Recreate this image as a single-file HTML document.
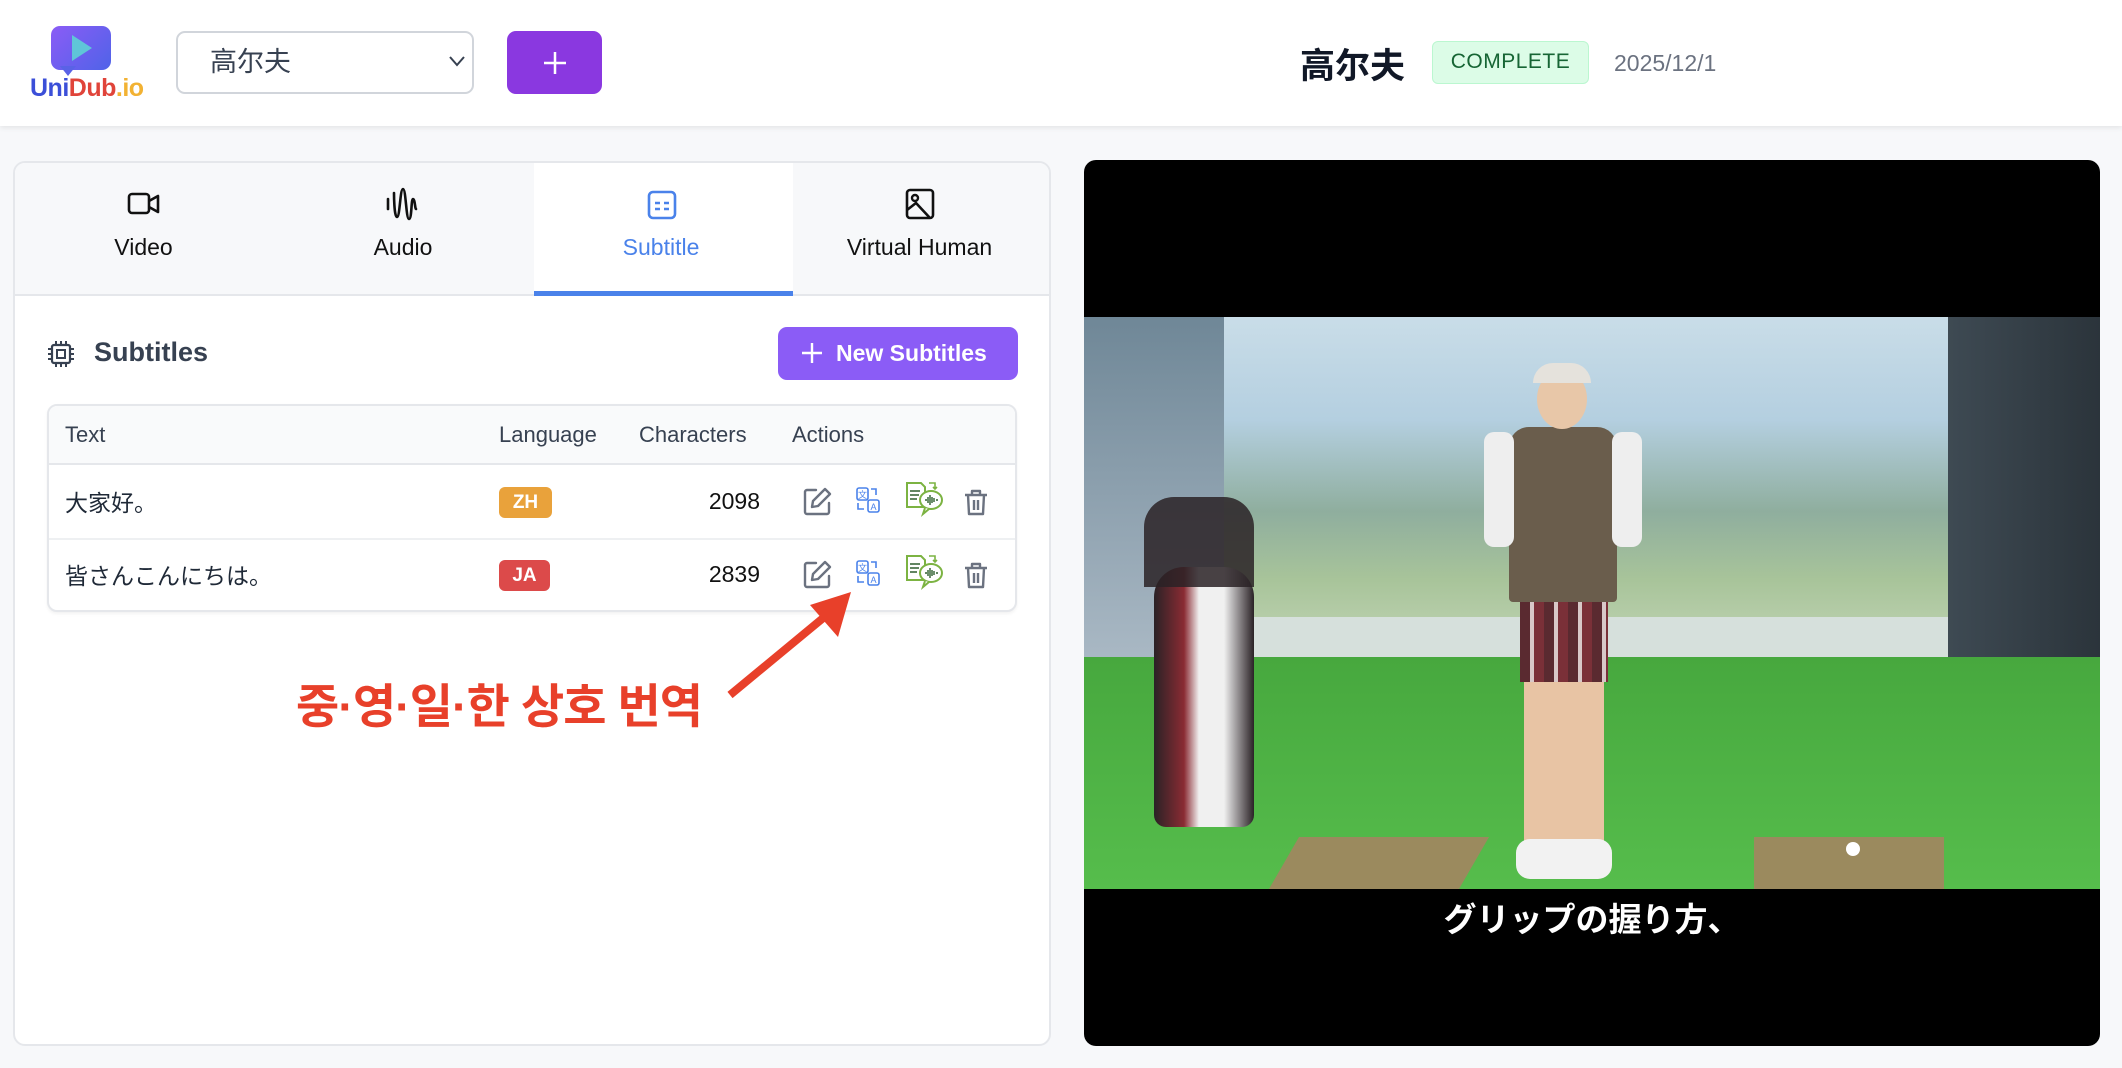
<!DOCTYPE html>
<html><head><meta charset="utf-8">
<style>
*{box-sizing:border-box;margin:0;padding:0}
body{width:2122px;height:1068px;background:#f7f8fa;font-family:"Liberation Sans","Noto Sans CJK SC",sans-serif;position:relative;overflow:hidden;color:#1f2937}
.abs{position:absolute}
.header{left:0;top:0;width:2122px;height:126px;background:#fff;box-shadow:0 2px 5px rgba(0,0,0,.08)}
.cjk{font-family:"Liberation Sans","Noto Sans CJK SC",sans-serif}
.jp{font-family:"Liberation Sans","Noto Sans CJK JP",sans-serif}
.kr{font-family:"Liberation Sans","Noto Sans CJK KR",sans-serif}
</style></head><body>
<div class="abs header"></div>
<!-- logo -->
<div class="abs" style="left:51px;top:26px;width:60px;height:44px;border-radius:9px;background:linear-gradient(135deg,#8b5cf6,#4f63e8)"></div>
<div class="abs" style="left:60px;top:66px;width:0;height:0;border-left:8px solid transparent;border-right:8px solid transparent;border-top:10px solid #5a62e6"></div>
<div class="abs" style="left:72px;top:35px;width:0;height:0;border-top:13px solid transparent;border-bottom:13px solid transparent;border-left:20px solid #5fc6d8"></div>
<div class="abs" style="left:30px;top:74px;font-size:25px;font-weight:bold;letter-spacing:-0.5px"><span style="color:#3b4fd8">Uni</span><span style="color:#e0443a">Dub</span><span style="color:#f2b233">.io</span></div>
<!-- select -->
<div class="abs cjk" style="left:176px;top:31px;width:298px;height:63px;border:2px solid #d1d5db;border-radius:9px;background:#fff;font-size:27px;line-height:59px;padding-left:32px;color:#374151">高尔夫</div>
<svg class="abs" style="left:448px;top:54px" width="18" height="14" viewBox="0 0 18 14"><path d="M2 3l7 8 7-8" fill="none" stroke="#374151" stroke-width="2"/></svg>
<div class="abs" style="left:507px;top:31px;width:95px;height:63px;border-radius:9px;background:#8a38e0"></div>
<svg class="abs" style="left:541px;top:49px" width="28" height="28"><path d="M14 3v22M3 14h22" stroke="#fff" stroke-width="2.5"/></svg>
<!-- title -->
<div class="abs cjk" style="left:1300px;top:38px;font-size:35px;font-weight:bold;color:#111827">高尔夫</div>
<div class="abs" style="left:1432px;top:41px;width:157px;height:43px;border:1.5px solid #bbf7d0;background:#dcfce7;border-radius:6px;color:#166534;font-size:21px;line-height:40px;text-align:center;letter-spacing:.5px">COMPLETE</div>
<div class="abs" style="left:1614px;top:50px;font-size:23px;color:#6b7280">2025/12/1</div>
<!-- left panel -->
<div class="abs" style="left:13px;top:161px;width:1038px;height:885px;background:#fff;border:2px solid #e5e7eb;border-radius:12px;overflow:hidden">
  <div class="abs" style="left:0;top:0;width:1036px;height:133px;background:#f7f8fa;border-bottom:2px solid #e5e7eb"></div>
  <div class="abs" style="left:519px;top:0;width:259px;height:133px;background:#fff;border-bottom:5px solid #4a82ea"></div>
</div>
<!-- tab icons -->
<svg class="abs" style="left:127px;top:191px" width="34" height="26" viewBox="0 0 34 26"><rect x="2" y="3" width="20" height="19" rx="3" fill="none" stroke="#111" stroke-width="2.6"/><path d="M22 10l9-5v16l-9-5" fill="none" stroke="#111" stroke-width="2.6" stroke-linejoin="round"/></svg>
<svg class="abs" style="left:385px;top:187px" width="34" height="36" viewBox="0 0 34 36"><path d="M3 12v10M9 6c0 0 0 24 3 24s3-28 6-28 3 30 6 30 2-20 4-20 2 10 3 10" fill="none" stroke="#111" stroke-width="2.6" stroke-linecap="round"/></svg>
<svg class="abs" style="left:647px;top:190px" width="30" height="30" viewBox="0 0 30 30"><rect x="2" y="2" width="26" height="26" rx="4" fill="none" stroke="#4a82ea" stroke-width="2.6"/><path d="M8 13h5M17 13h5M8 19h5M17 19h5" stroke="#4a82ea" stroke-width="2.6"/></svg>
<svg class="abs" style="left:905px;top:188px" width="30" height="32" viewBox="0 0 30 32"><rect x="2" y="2" width="26" height="28" rx="3" fill="none" stroke="#111" stroke-width="2.6"/><circle cx="10" cy="10" r="3" fill="none" stroke="#111" stroke-width="2.4"/><path d="M2 22l9-7 14 15" fill="none" stroke="#111" stroke-width="2.6"/></svg>
<div class="abs" style="left:0;top:234px;width:287px;text-align:center;font-size:23px;color:#111">Video</div>
<div class="abs" style="left:274px;top:234px;width:258px;text-align:center;font-size:23px;color:#111">Audio</div>
<div class="abs" style="left:532px;top:234px;width:258px;text-align:center;font-size:23px;color:#4a82ea">Subtitle</div>
<div class="abs" style="left:790px;top:234px;width:259px;text-align:center;font-size:23px;color:#111">Virtual Human</div>
<!-- subtitles header -->
<svg class="abs" style="left:47px;top:339px" width="28" height="30" viewBox="0 0 28 30"><rect x="5" y="6" width="18" height="18" rx="2" fill="none" stroke="#374151" stroke-width="2.2"/><rect x="10" y="11" width="8" height="8" fill="none" stroke="#374151" stroke-width="2"/><path d="M9 2v4M14 2v4M19 2v4M9 24v4M14 24v4M19 24v4M1 10h4M1 15h4M1 20h4M23 10h4M23 15h4M23 20h4" stroke="#374151" stroke-width="2"/></svg>
<div class="abs" style="left:94px;top:337px;font-size:27px;font-weight:bold;color:#374151">Subtitles</div>
<div class="abs" style="left:778px;top:327px;width:240px;height:53px;border-radius:9px;background:#8b5cf6;color:#fff;font-size:23px;font-weight:bold;line-height:53px;padding-left:58px">New Subtitles</div>
<svg class="abs" style="left:800px;top:341px" width="24" height="24"><path d="M12 2v20M2 12h20" stroke="#fff" stroke-width="2.4"/></svg>
<!-- table -->
<div class="abs" style="left:47px;top:404px;width:970px;height:208px;border:2px solid #e5e7eb;border-radius:10px;overflow:hidden;background:#fff;box-shadow:0 2px 3px rgba(0,0,0,.05)">
  <div class="abs" style="left:0;top:0;width:970px;height:59px;background:#f9fafb;border-bottom:2px solid #e5e7eb"></div>
  <div class="abs" style="left:0;top:132px;width:970px;height:2px;background:#eef0f2"></div>
</div>
<div class="abs" style="left:65px;top:422px;font-size:22px;color:#374151">Text</div>
<div class="abs" style="left:499px;top:422px;font-size:22px;color:#374151">Language</div>
<div class="abs" style="left:639px;top:422px;font-size:22px;color:#374151">Characters</div>
<div class="abs" style="left:792px;top:422px;font-size:22px;color:#374151">Actions</div>
<div class="abs cjk" style="left:65px;top:484px;font-size:23px;color:#1f2937">大家好。</div>
<div class="abs jp" style="left:65px;top:557px;font-size:23px;color:#1f2937">皆さんこんにちは。</div>
<div class="abs" style="left:499px;top:487px;width:53px;height:31px;border-radius:6px;background:#e9a23b;color:#fff;font-size:19px;font-weight:bold;text-align:center;line-height:31px">ZH</div>
<div class="abs" style="left:499px;top:560px;width:51px;height:31px;border-radius:6px;background:#dc4a4a;color:#fff;font-size:19px;font-weight:bold;text-align:center;line-height:31px">JA</div>
<div class="abs" style="left:650px;top:488px;width:110px;text-align:right;font-size:23px;color:#111">2098</div>
<div class="abs" style="left:650px;top:561px;width:110px;text-align:right;font-size:23px;color:#111">2839</div>
<!-- icons rows -->
<svg width="0" height="0" style="position:absolute"><defs>
<g id="ed"><path d="M14 3H5a2 2 0 0 0-2 2v20a2 2 0 0 0 2 2h20a2 2 0 0 0 2-2v-9" fill="none" stroke="#6b7280" stroke-width="2.4" stroke-linecap="round"/><path d="M23 2l5 5-12 12-6 1 1-6z" fill="none" stroke="#6b7280" stroke-width="2.4" stroke-linejoin="round"/></g>
<g id="tr"><rect x="1" y="1" width="11" height="12" rx="2" fill="none" stroke="#4a82ea" stroke-width="1.6"/><text x="6.5" y="11" font-size="9" fill="#4a82ea" text-anchor="middle" font-family="Noto Sans CJK SC">文</text><rect x="12" y="13" width="11" height="12" rx="2" fill="none" stroke="#4a82ea" stroke-width="1.6"/><text x="17.5" y="23" font-size="9" fill="#4a82ea" text-anchor="middle" font-family="Liberation Sans">A</text><path d="M2 16v6h6M15 2h5v6" fill="none" stroke="#4a82ea" stroke-width="1.6"/></g>
<g id="gr"><path d="M2 2h14l4 4v20H2z" fill="none" stroke="#7cb342" stroke-width="2"/><path d="M5 10h10M5 14h9M5 18h7" stroke="#2e5e2e" stroke-width="1.6"/><ellipse cx="26" cy="19" rx="11" ry="9" fill="#fff" stroke="#7cb342" stroke-width="2"/><path d="M20 27l-2 6 6-5" fill="#fff" stroke="#7cb342" stroke-width="2"/><path d="M20 19h2M23 16v6M25 14v10M27 16v6M29 17v4M31 19h2" stroke="#2e5e2e" stroke-width="1.4"/><path d="M24 2h6v6M28 6l2 2 2-2" fill="none" stroke="#7cb342" stroke-width="1.6"/></g>
<g id="tb"><path d="M2 7h22M9 7V3h8v4M5 7l1 19h14l1-19M11 12v10M15 12v10" fill="none" stroke="#6b7280" stroke-width="2.4" stroke-linejoin="round"/></g>
</defs></svg>
<svg class="abs" style="left:802px;top:487px" width="32" height="30"><use href="#ed"/></svg>
<svg class="abs" style="left:856px;top:487px" width="26" height="28"><use href="#tr"/></svg>
<svg class="abs" style="left:905px;top:481px" width="40" height="36"><use href="#gr"/></svg>
<svg class="abs" style="left:963px;top:488px" width="28" height="30"><use href="#tb"/></svg>
<svg class="abs" style="left:802px;top:560px" width="32" height="30"><use href="#ed"/></svg>
<svg class="abs" style="left:856px;top:560px" width="26" height="28"><use href="#tr"/></svg>
<svg class="abs" style="left:905px;top:554px" width="40" height="36"><use href="#gr"/></svg>
<svg class="abs" style="left:963px;top:561px" width="28" height="30"><use href="#tb"/></svg>
<!-- annotation -->
<div class="abs kr" style="left:296px;top:668px;font-size:47px;font-weight:bold;color:#e8402a;letter-spacing:-1px">중·영·일·한 상호 번역</div>
<svg class="abs" style="left:720px;top:580px" width="150" height="125"><path d="M10 115L108 34" stroke="#e8402a" stroke-width="8"/><path d="M131 12L90 25l28 32z" fill="#e8402a"/></svg>
<!-- video -->
<div class="abs" style="left:1084px;top:160px;width:1016px;height:886px;background:#000;border-radius:12px;overflow:hidden">
  <div class="abs" style="left:0;top:157px;width:1016px;height:572px;background:linear-gradient(180deg,#c9dde8 0%,#b4cfe0 18%,#8fae9e 34%,#a8c49a 46%,#c4d6b8 60%,#d0dccc 68%,#55b94c 70%,#4fb345 100%)">
    <div class="abs" style="left:0;top:0;width:140px;height:340px;background:linear-gradient(180deg,#6f8797,#a9b8c4)"></div>
    <div class="abs" style="left:864px;top:0;width:152px;height:340px;background:linear-gradient(90deg,#3e4a53,#2b343b)"></div>
    <div class="abs" style="left:864px;top:340px;width:152px;height:230px;background:linear-gradient(180deg,#2f3a40,#3a4b44 40%,#4aa240 100%)"></div>
    <div class="abs" style="left:140px;top:300px;width:724px;height:40px;background:#d6e0dc"></div>
    <div class="abs" style="left:0;top:340px;width:1016px;height:232px;background:linear-gradient(180deg,#47a83e,#56bd4c)"></div>
    <div class="abs" style="left:200px;top:520px;width:190px;height:52px;background:#9b8a5e;transform:skewX(-30deg)"></div>
    <div class="abs" style="left:670px;top:520px;width:190px;height:52px;background:#9b8a5e"></div>
    <div class="abs" style="left:425px;top:110px;width:108px;height:175px;background:#6a5d4c;border-radius:20px 20px 4px 4px"></div>
    <div class="abs" style="left:400px;top:115px;width:30px;height:115px;background:#eee;border-radius:10px"></div>
    <div class="abs" style="left:528px;top:115px;width:30px;height:115px;background:#eee;border-radius:10px"></div>
    <div class="abs" style="left:453px;top:52px;width:50px;height:60px;background:#e8c7a8;border-radius:50%"></div>
    <div class="abs" style="left:449px;top:46px;width:58px;height:20px;background:#e5e2dc;border-radius:20px 20px 0 0"></div>
    <div class="abs" style="left:436px;top:285px;width:88px;height:80px;background:repeating-linear-gradient(90deg,#5a2a30 0 10px,#d8c8c8 10px 14px,#7a3038 14px 24px)"></div>
    <div class="abs" style="left:440px;top:365px;width:80px;height:160px;background:#e8c4a4"></div>
    <div class="abs" style="left:432px;top:522px;width:96px;height:40px;background:#f2f2f2;border-radius:14px"></div>
    <div class="abs" style="left:70px;top:250px;width:100px;height:260px;background:linear-gradient(90deg,#2a2226,#8a2b33 30%,#f0f0f0 45%,#f0f0f0 70%,#2a2226);border-radius:30px 30px 12px 12px"></div>
    <div class="abs" style="left:60px;top:180px;width:110px;height:90px;background:#2a2226;border-radius:30px 30px 0 0;opacity:.85"></div>
    <div class="abs" style="left:762px;top:525px;width:14px;height:14px;background:#fff;border-radius:50%"></div>
  </div>
  <div class="abs jp" style="left:0;top:733px;width:1016px;text-align:center;font-size:33px;font-weight:bold;color:#fff">グリップの握り方、</div>
</div>
</body></html>
